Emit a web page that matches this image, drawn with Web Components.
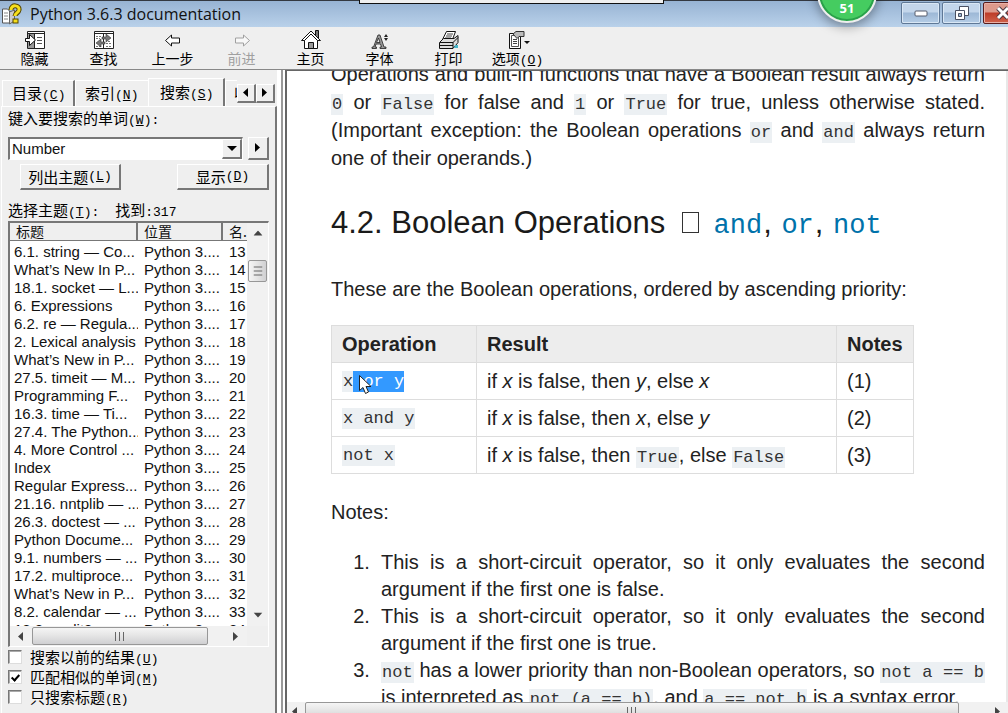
<!DOCTYPE html>
<html lang="zh-CN">
<head>
<meta charset="utf-8">
<title>Python 3.6.3 documentation</title>
<style>
html,body{margin:0;height:100%}
body{font-family:"Liberation Sans","Noto Sans CJK SC",sans-serif;overflow:hidden}
</style>
</head>
<body>
<help-window></help-window>
<script>
function define(name, html) {
  const t = document.createElement('template');
  t.innerHTML = html;
  customElements.define(name, class extends HTMLElement {
    constructor() {
      super();
      this.attachShadow({ mode: 'open' }).append(t.content.cloneNode(true));
    }
  });
}

define('title-bar', `
<style>
:host{display:flex;height:27px;box-sizing:border-box;border-top:1px solid #333840;background:linear-gradient(#97b3d3,#b9d1ea);align-items:center;position:relative;overflow:visible;flex:none}
.logo{margin-left:1px;flex:none}
h1{margin:0 0 0 8px;font:16px/24px "Open Sans","Noto Sans",sans-serif;color:#111;flex:1;white-space:nowrap}
.buttons{display:flex;gap:2px;align-self:flex-start;margin-top:1px;margin-right:-14px;flex:none}
button{width:39px;height:22px;box-sizing:border-box;padding:0;border:1px solid #5f7896;border-radius:2px;background:linear-gradient(#c3d6eb 0 45%,#9db8d6 50%,#b5cde6);box-shadow:inset 0 0 0 1px #d9e7f5;display:flex;align-items:center;justify-content:center}
button.close{background:linear-gradient(#dd9a8c 0 45%,#bd3c28 50%,#d0624c);border-color:#591c1c;box-shadow:inset 0 0 0 1px #e9b0a6;}
.dock{position:absolute;left:359px;right:344px;top:-1px;height:4px;box-sizing:border-box;background:#f0f0f0;border:1px solid #111;border-top:0}
.badge{position:absolute;right:131px;top:-38px;width:60px;height:60px;box-sizing:border-box;border-radius:50%;background:#45cc60;border:2px solid #eee;box-shadow:inset 0 0 0 2px #2aa04a,0 3px 12px #0006;color:#fff;font:bold 13px/20px "Open Sans",sans-serif;text-align:center;padding-top:33px;z-index:2}
</style>
<svg class="logo" width="21" height="22" viewBox="0 0 21 22"><path d="M1.500 6h5l2 2v12h-7z" fill="#fff" stroke="#555"/><path d="M8.500 9l5-2v11l-5 3z" fill="#ccc" stroke="#666"/><path d="M3 10h4M3 13h4M3 16h4" stroke="#888"/><path d="M10 7c0-6 9-5 8 0-.4 3-4 3-4 6" fill="none" stroke="#554600" stroke-width="5"/><path d="M10 7c0-6 9-5 8 0-.4 3-4 3-4 6" fill="none" stroke="#f5df1c" stroke-width="3"/><rect x="12" y="16" width="5" height="4" fill="#f5df1c" stroke="#554600"/></svg>
<h1>Python 3.6.3 documentation</h1>
<div class="buttons">
<button aria-label="Minimize"><svg width="14" height="7"><rect x="1" y="1" width="12" height="5" rx="1" fill="#fff" stroke="#555b6b"/></svg></button>
<button aria-label="Restore"><svg width="16" height="16" viewBox="0 0 16 16"><path d="M5.500 1.500h9v9h-9z" fill="#fff" stroke="#4a5162"/><path d="M1.500 5.500h9v9h-9z" fill="#fff" stroke="#4a5162"/><path d="M4.500 8.500h3v3h-3z" fill="#9db8d6" stroke="#4a5162"/></svg></button>
<button class="close" aria-label="Close"><svg width="16" height="14" viewBox="0 0 16 14"><path d="M3 2l10 10M13 2L3 12" stroke="#4d3a44" stroke-width="5"/><path d="M3 2l10 10M13 2L3 12" stroke="#fff" stroke-width="3"/></svg></button>
</div>
<div class="dock"></div><div class="badge">51</div>`);

define('tool-button', `
<style>
:host{display:block;width:69px;color:#000}
:host([disabled]){color:#a0a0a0}
button{all:unset;display:flex;flex-direction:column;align-items:center;width:100%;font:14px/16px "Noto Sans CJK SC",sans-serif;white-space:nowrap}
.icon{height:20px;display:flex;align-items:end}
</style>
<button><span class="icon"><slot name="icon"></slot></span><span><slot></slot></span></button>`);

define('tool-bar', `
<style>
:host{display:flex;height:42px;padding-top:3px;box-sizing:border-box;background:#efefef;flex:none}
svg{display:block}
.k{font:13px "Liberation Mono",monospace}
</style>
<tool-button><svg slot="icon" width="22" height="20" viewBox="0 0 22 20"><path d="M3.500 1.500h17v17h-17z" fill="#fff" stroke="#222"/><path d="M4 3.500h16" stroke="#222"/><path d="M4 4h6v14H4z" fill="#999"/><path d="M10.500 4v14" stroke="#222"/><path d="M13 7.500h5M13 10.500h5M13 13.500h5" stroke="#555"/><path d="M1.500 8.500h4v-4l6 5.500-6 5.500v-4h-4z" fill="#fff" stroke="#111"/></svg>隐藏</tool-button>
<tool-button><svg slot="icon" width="22" height="20" viewBox="0 0 22 20"><path d="M1.500 1.500h19v17h-19z" fill="#fff" stroke="#222"/><path d="M2 3.500h18M10.500 4v14" stroke="#222"/><path d="M3 6.500h5M3 8.500h4M3 16.500h6M13 13.500h5M13 16.500h5M15 11.500h3" stroke="#777" stroke-dasharray="2 1"/><path d="M9 7h4V4l5 4-5 4V9H9zM12 12H8V9l-5 4 5 4v-3h4z" fill="#777" stroke="#333" stroke-width=".6"/></svg>查找</tool-button>
<tool-button><svg slot="icon" width="18" height="17" viewBox="0 0 18 17"><path d="M1.500 7.500l6-5.500v3h8v5h-8v3z" fill="#fff" stroke="#111"/></svg>上一步</tool-button>
<tool-button disabled><svg slot="icon" width="18" height="17" viewBox="0 0 18 17"><path d="M16.500 7.500l-6-5.500v3h-8v5h8v3z" fill="#f8f8f8" stroke="#a0a0a0"/></svg>前进</tool-button>
<tool-button><svg slot="icon" width="22" height="21" viewBox="0 0 22 21"><path d="M4.500 10v9.500h13V10L11 3.500z" fill="#fff" stroke="#111"/><path d="M15.500 6V1.500h3V9" fill="#777" stroke="#111"/><path d="M1.500 11.500L11 2l9.500 9.500h-3L11 5l-6.500 6.500z" fill="#fff" stroke="#111"/><path d="M8.500 13.500h5v6h-5z" fill="#999" stroke="#111"/></svg>主页</tool-button>
<tool-button><svg slot="icon" width="20" height="17" viewBox="0 0 20 17"><path d="M8 2h2l4 12h2v1.500h-6V14h1.500l-1-3H6l-1 3h1.500v1.500H2V14h1.500zM6.500 9.500h3.500L8.500 5z" fill="#999" fill-rule="evenodd" stroke="#222" stroke-width=".8"/><path d="M14 4l2-3 2 3zM14 5h4l-2 3z" fill="#222"/></svg>字体</tool-button>
<tool-button><svg slot="icon" width="22" height="20" viewBox="0 0 22 20"><path d="M4.500 9.500l4-8h9l-3 8z" fill="#fff" stroke="#111"/><path d="M9 4h6M8 6h6M7 8h6" stroke="#444"/><path d="M1.500 12.500l4-4H16l4-3v7l-5 6H1.500z" fill="#ddd" stroke="#111"/><path d="M2 12.500h13l5-5M15 12v6M2 15.500h13" fill="none" stroke="#111"/><path d="M17 15h3v3h-4z" fill="#47b5c9"/></svg>打印</tool-button>
<tool-button><svg slot="icon" width="24" height="20" viewBox="0 0 24 20"><path d="M3.500 3.500h11v15h-11z" fill="#fff" stroke="#111"/><path d="M5.500 5.500h7v11h-7z" fill="none" stroke="#555"/><path d="M7 9.500h4M7 11.500h4M7 13.500h4" stroke="#444"/><path d="M7 4l3-2.500h8v5h-5l-2 2z" fill="#bbb" stroke="#333"/><path d="M18 11h6l-3 3z" fill="#111"/></svg>选项<span class="k">(<u>O</u>)</span></tool-button>`);

define('tab-strip', `
<style>
:host{display:flex;align-items:flex-end;height:28px;padding-left:2px;font:15px/22px "Noto Sans CJK SC",sans-serif;overflow:hidden}
button{all:unset;box-sizing:border-box;height:26px;width:73px;padding:0 0 2px 9px;border-top:1px solid #fff;border-left:1px solid #fff;border-right:2px solid #777;white-space:nowrap;line-height:20px;flex:none}
button.on{height:28px;width:77px;padding-left:11px}
button.plain{border-right:0}
button.cut{width:12px;padding-left:8px;border-right:0;overflow:hidden}
button.arrow{width:19px;height:19px;padding:0;border:1px solid #fff;border-right:2px solid #777;border-bottom:2px solid #777;display:flex;align-items:center;justify-content:center;margin-bottom:3px}
.k{font:13px "Liberation Mono",monospace}
</style>
<button role="tab">目录<span class="k">(<u>C</u>)</span></button><button role="tab" class="plain">索引<span class="k">(<u>N</u>)</span></button><button role="tab" class="on" aria-selected="true">搜索<span class="k">(<u>S</u>)</span></button><button role="tab" class="cut">收</button><button class="arrow" aria-label="Previous tab"><svg width="6" height="10"><path d="M5 0v9L0 4.500z"/></svg></button><button class="arrow" aria-label="Next tab"><svg width="6" height="10"><path d="M0 0v9l5-4.500z"/></svg></button>`);

define('scroll-bar', `
<style>
:host{display:flex;align-items:center;justify-content:space-between;background:#f1f1f1;box-sizing:border-box}
:host([vertical]){flex-direction:column}
.thumb{box-sizing:border-box;border:1px solid #979797;border-radius:2px;background:linear-gradient(#f5f5f5,#e4e4e4 50%,#d0d0d2);display:flex;align-items:center;justify-content:center;height:var(--h,18px);width:var(--thumb,176px)}
:host([vertical]) .thumb{width:19px;height:22px;background:linear-gradient(90deg,#f5f5f5,#e4e4e4 50%,#d0d0d2)}
:host([vertical]) .thumb svg{transform:rotate(90deg)}
:host([vertical]) .a{transform:rotate(90deg)}
.a{flex:none;margin:0 8px}
:host([tight]) .a{margin:0 7px 0 5px}
:host([vertical]) .a{margin:6px 0}
.track{flex:1;align-self:stretch;display:flex;align-items:center}
:host([vertical]) .track{flex-direction:column;padding-top:16px}
</style>
<svg class="a" width="6" height="9"><path d="M5 0v9L0 4.500z" fill="#444"/></svg><div class="track"><div class="thumb"><svg width="12" height="9"><path d="M1.500 0v9M5.500 0v9M9.500 0v9" stroke="#666"/></svg></div></div><svg class="a" width="6" height="9"><path d="M0 0v9l5-4.500z" fill="#444"/></svg>`);

define('topic-list', `
<style>
:host{display:grid;grid-template:minmax(0,1fr) 20px/minmax(0,1fr) 21px;border:2px solid #777;border-right:1px solid #fff;border-bottom:1px solid #fff;background:#fff;box-sizing:border-box;min-height:0;overflow:hidden}
.view{overflow:hidden;min-height:0}
table{border-collapse:separate;border-spacing:0;table-layout:fixed;width:100%;font:15px/18px "Liberation Sans",sans-serif;color:#111}
th{font:14px/17px "Noto Sans CJK SC",sans-serif;text-align:left;padding:0 0 0 6px;background:#efefef;border-right:2px solid #777;border-bottom:1px solid #777;box-sizing:border-box;height:18px;white-space:nowrap;overflow:hidden}
th:last-child{border-right:0}
td{padding:0 0 0 6px;white-space:nowrap;overflow:hidden}
td:first-child{padding-left:4px}
tbody tr:first-child td{padding-top:2px}
scroll-bar.v{grid-column:2}
.corner{background:#efefef}
</style>
<div class="view"><table><colgroup><col style="width:128px"><col style="width:85px"><col></colgroup><thead><tr><th>标题</th><th>位置</th><th>名.</th></tr></thead><tbody></tbody></table></div>
<scroll-bar class="v" vertical></scroll-bar><scroll-bar></scroll-bar><div class="corner"></div>`);

const topics = ['6.1. string — Co...','What’s New In P...','18.1. socket — L...','6. Expressions','6.2. re — Regula...','2. Lexical analysis','What’s New in P...','27.5. timeit — M...','Programming F...','16.3. time — Ti...','27.4. The Python...','4. More Control ...','Index','Regular Express...','21.16. nntplib — ...','26.3. doctest — ...','Python Docume...','9.1. numbers — ...','17.2. multiproce...','What’s New in P...','8.2. calendar — ...','18.2. audit3 — ...'];

define('search-pane', `
<style>
:host{display:flex;flex-direction:column;width:277px;box-sizing:border-box;padding-top:8px;background:#efefef;flex:none;min-height:0;font:15px/20px "Noto Sans CJK SC",sans-serif;color:#000}
.panel{flex:1;min-height:0;display:flex;flex-direction:column;border:1px solid #fff;border-right:2px solid #777;border-bottom:0;margin-left:1px;padding:1px 6px 5px;box-sizing:border-box}
.k{font:13px "Liberation Mono",monospace}
.row{display:flex;gap:5px;margin-top:9px}
.combo{flex:1;display:flex;height:23px;box-sizing:border-box;border:2px solid #777;border-right:1px solid #fff;border-bottom:1px solid #fff;background:#fff}
input[type=text]{flex:1;min-width:0;border:0;padding:0 2px;font:15px/18px "Liberation Sans",sans-serif;outline:0;background:#fff;color:#111}
button{box-sizing:border-box;margin:0;padding:0;border:1px solid #fff;border-right:2px solid #777;border-bottom:2px solid #777;background:#efefef;font:inherit;line-height:20px;color:#000;display:flex;align-items:center;justify-content:center}
.combo button{width:20px}
.go{width:21px;height:23px}
.acts{justify-content:space-between;margin-top:4px;margin-left:12px}
.acts button{height:26px;width:101px;flex:none}
.acts button:last-child{width:92px}
.found{margin:10px 0 1px;display:flex;gap:16px}
label.c{display:flex;align-items:center;gap:8px;height:20px}
.checks{margin-bottom:1px}
input[type=checkbox]{appearance:none;margin:0;width:14px;height:14px;box-sizing:border-box;border:1px solid #777;border-right-color:#ddd;border-bottom-color:#ddd;background:#fff;box-shadow:inset 1px 1px #aaa;display:grid;place-items:center}
input:checked::after{content:"";width:3px;height:6px;border:solid #000;border-width:0 2px 2px 0;transform:rotate(42deg)}
topic-list{flex:1}
</style>
<tab-strip></tab-strip>
<div class="panel">
<label for="q">键入要搜索的单词<span class="k">(<u>W</u>):</span></label>
<div class="row"><div class="combo"><input id="q" type="text" value="Number"><button aria-label="Open list"><svg width="10" height="6"><path d="M0 0h10L5 5z"/></svg></button></div><button class="go" aria-label="Insert operator"><svg width="6" height="10"><path d="M0 0v9l5-4.500z"/></svg></button></div>
<div class="row acts"><button>列出主题<span class="k">(<u>L</u>)</span></button><button>显示<span class="k">(<u>D</u>)</span></button></div>
<div class="found"><span>选择主题<span class="k">(<u>T</u>):</span></span><span>找到<span class="k">:317</span></span></div>
<topic-list></topic-list>
<div class="checks">
<label class="c"><input type="checkbox"><span>搜索以前的结果<span class="k">(<u>U</u>)</span></span></label>
<label class="c"><input type="checkbox" checked><span>匹配相似的单词<span class="k">(<u>M</u>)</span></span></label>
<label class="c"><input type="checkbox"><span>只搜索标题<span class="k">(<u>R</u>)</span></span></label>
</div></div>`);

define('doc-page', `
<style>
:host{flex:1;min-width:0;min-height:0;overflow:hidden;display:grid;grid-template:minmax(0,1fr) 11px/minmax(0,1fr) 2px;border:solid #666;border-width:1px 0 0 2px;background:#fff}
.view{overflow:hidden;min-height:0}
article{margin-top:-11px;padding:0 21px 0 44px;font:20px/27px "Liberation Sans",sans-serif;color:#222}
p{margin:0;text-align:justify}
.lead{line-height:28px}
code{font:17px "Liberation Mono",monospace;background:#ecf0f3;padding:1px;color:#333}
h2{font-weight:400;font-size:31px;line-height:40px;margin:31px 0 33px;color:#1a1a1a}
h2 code{font-size:27px;background:none;color:inherit}
a{color:#0072aa;text-decoration:none}
.box{display:inline-block;width:17px;height:21px;border:1px solid #333;box-sizing:border-box;margin:0 5px 0 8px}
table{border-collapse:collapse;margin:22px 0 25px;table-layout:fixed;width:583px}
th,td{border:1px solid #ddd;padding:5px 10px 4px;text-align:left}
th{background:#ededed}
td:first-child{line-height:22px;vertical-align:top}
.sel{position:relative;background:#39f;color:#fff;padding:1px 0;margin-right:-1px}
.sel svg{position:absolute;left:6px;top:4px}
ol{margin:23px 0 0;padding-left:50px}
li{text-align:justify}
li::marker{content:counter(list-item) ".\\00a0\\00a0"}
.rail{background:#e8e8e8}
scroll-bar{height:18px;--thumb:654px}
.bottom{grid-column:1/-1;overflow:hidden}
</style>
<div class="view"><article>
<p class="lead">Operations and built-in functions that have a Boolean result always return <code>0</code> or <code>False</code> for false and <code>1</code> or <code>True</code> for true, unless otherwise stated. (Important exception: the Boolean operations <code>or</code> and <code>and</code> always return one of their operands.)</p>
<h2>4.2. Boolean Operations <span class="box"></span> <a href="#and"><code>and</code></a>, <a href="#or"><code>or</code></a>, <a href="#not"><code>not</code></a></h2>
<p>These are the Boolean operations, ordered by ascending priority:</p>
<table><colgroup><col style="width:145px"><col style="width:360px"><col></colgroup>
<thead><tr><th>Operation</th><th>Result</th><th>Notes</th></tr></thead>
<tbody><tr><td><code>x<span class="sel"> or y<svg width="13" height="20" viewBox="0 0 13 20"><path d="M.5.500v15l3.500-3 2.500 6 3-1.500L7 11.500h5z" fill="#fff" stroke="#222"/></svg></span></code></td><td>if <em>x</em> is false, then <em>y</em>, else <em>x</em></td><td>(1)</td></tr>
<tr><td><code>x and y</code></td><td>if <em>x</em> is false, then <em>x</em>, else <em>y</em></td><td>(2)</td></tr>
<tr><td><code>not x</code></td><td>if <em>x</em> is false, then <code>True</code>, else <code>False</code></td><td>(3)</td></tr></tbody></table>
<p>Notes:</p>
<ol><li>This is a short-circuit operator, so it only evaluates the second argument if the first one is false.</li>
<li>This is a short-circuit operator, so it only evaluates the second argument if the first one is true.</li>
<li><code>not</code> has a lower priority than non-Boolean operators, so <code>not a == b</code> is interpreted as <code>not (a == b)</code>, and <code>a == not b</code> is a syntax error.</li></ol>
</article></div><div class="rail"></div>
<div class="bottom"><scroll-bar tight></scroll-bar></div>`);

define('help-window', `
<style>
:host{display:flex;flex-direction:column;height:100vh;background:#efefef}
main{flex:1;min-height:0;display:flex;border-top:1px solid #888}
.split{width:8px;flex:none;box-sizing:border-box;border:solid #fff;border-width:0 2px 0 4px;background:#999}
</style>
<title-bar></title-bar><tool-bar></tool-bar><main><search-pane></search-pane><div class="split"></div><doc-page></doc-page></main>`);

const pane = document.querySelector('help-window').shadowRoot.querySelector('search-pane');
const body = pane.shadowRoot.querySelector('topic-list').shadowRoot.querySelector('tbody');
topics.forEach((t, i) => {
  const row = body.insertRow();
  [t, 'Python 3....', String(13 + i)].forEach(v => { row.insertCell().textContent = v; });
});
</script>
</body>
</html>
